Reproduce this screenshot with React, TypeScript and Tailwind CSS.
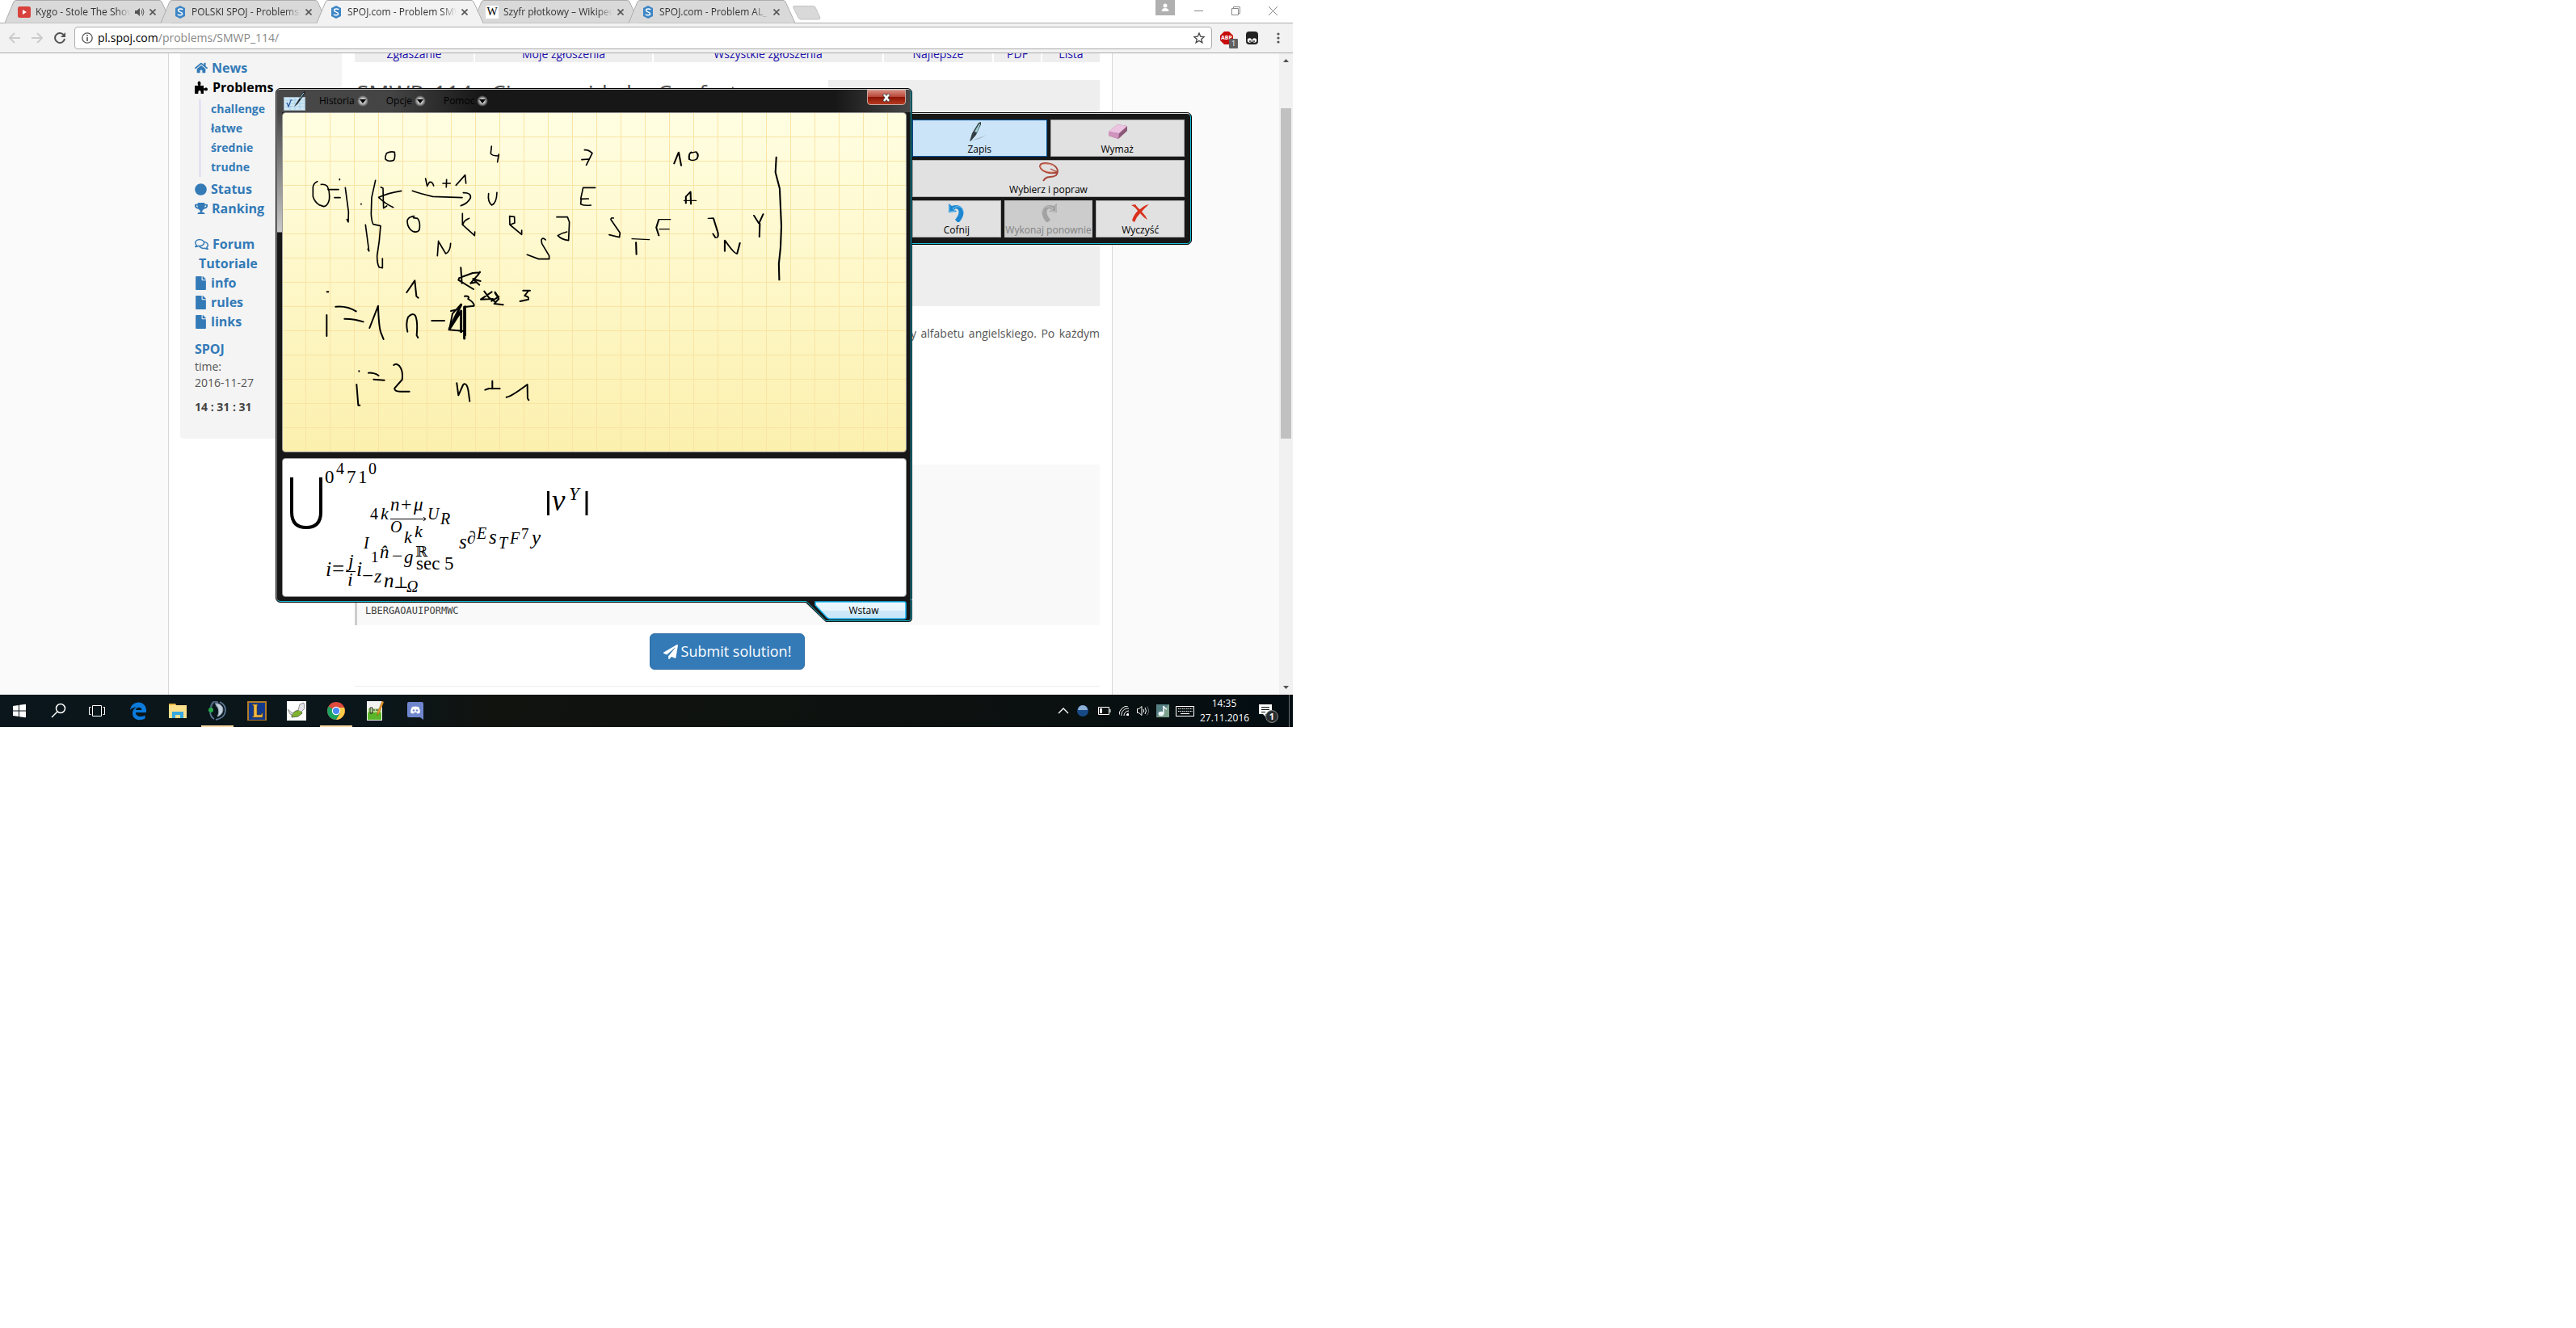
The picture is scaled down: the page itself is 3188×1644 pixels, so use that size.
import React from "react";
import { FaHome, FaCircle, FaTrophy, FaRegComments, FaFile, FaPaperPlane } from "react-icons/fa";

function SpojIcon() {
  return (
    <svg className="size-4 shrink-0" viewBox="0 0 16 16">
      <path d="M8 0l6 3v10l-6 3-6-3V3z" fill="#3d86c6" />
      <path d="M11 5.200C10 3.600 5.600 3.600 5.600 6c0 2.200 5 1.600 5 4 0 2.400-4.600 2.200-5.600.600" fill="none" stroke="#fff" strokeWidth="1.500" />
    </svg>
  );
}

function YoutubeIcon() {
  return (
    <svg className="size-4 shrink-0" viewBox="0 0 16 16">
      <rect y="1" width="16" height="14" rx="2.500" fill="#d9413c" />
      <path d="M6 5l5 3-5 3z" fill="#fff" />
    </svg>
  );
}

function WikiIcon() {
  return (
    <span className="flex size-4 shrink-0 items-center justify-center bg-white font-['Liberation_Serif',serif] text-sm leading-4 text-black">W</span>
  );
}

type TabInfo = { label: string; icon: React.ReactNode; active?: boolean; audio?: boolean };

const tabs: TabInfo[] = [
  { label: "Kygo - Stole The Show", icon: <YoutubeIcon />, audio: true },
  { label: "POLSKI SPOJ - Problems:", icon: <SpojIcon /> },
  { label: "SPOJ.com - Problem SMW", icon: <SpojIcon />, active: true },
  { label: "Szyfr płotkowy – Wikiped", icon: <WikiIcon /> },
  { label: "SPOJ.com - Problem AL_2", icon: <SpojIcon /> },
];

function BrowserTab({ tab }: { tab: TabInfo }) {
  return (
    <div className={`relative -mr-[13px] h-7 w-[206px] ${tab.active ? "z-10" : ""}`}>
      <svg className="absolute inset-0 h-[29px] w-full" viewBox="0 0 206 29" preserveAspectRatio="none">
        <path d="M0 28.500L11 2Q12 .500 14 .500H191Q193 .500 194 2L206 28.500" fill={tab.active ? "#f2f2f2" : "#d9d9d9"} stroke="#adadad" />
        {tab.active && <path d="M1 28.500H205" stroke="#f2f2f2" strokeWidth="2" />}
      </svg>
      <div className="relative flex h-full items-center pt-px pr-[17px] pl-4">
        {tab.icon}
        <span className="ml-1.5 min-w-0 flex-1 overflow-hidden whitespace-nowrap text-[12px] leading-4 text-[#333] [mask-image:linear-gradient(to_right,black_86%,transparent)]">{tab.label}</span>
        {tab.audio && (
          <svg className="ml-1.5 size-3 shrink-0" viewBox="0 0 12 12">
            <path d="M0 4h2.500L6 1v10L2.500 8H0z" fill="#555" />
            <path d="M8 3.500Q9.500 6 8 8.500M9.500 1.500Q12.500 6 9.500 10.500" fill="none" stroke="#555" />
          </svg>
        )}
        <button aria-label="Close tab" className="ml-1 flex size-3 shrink-0 items-center justify-center">
          <svg className="size-2" viewBox="0 0 8 8"><path d="M.500.500l7 7m0-7l-7 7" stroke="#555" strokeWidth="1.600" /></svg>
        </button>
      </div>
    </div>
  );
}

function BrowserChrome() {
  return (
    <header className="border-b border-[#adadad] bg-[#f2f2f2]">
      <div className="flex h-[29px] items-start border-b border-[#adadad] bg-white pl-1.5">
        {tabs.map((t) => <BrowserTab key={t.label} tab={t} />)}
        <button aria-label="New tab" className="mt-[7px] ml-2.5">
          <svg className="h-[18px] w-[35px]" viewBox="0 0 35 18"><path d="M2 .500H25Q27 .500 28 2L34 15Q34 17 32 17H10Q8 17 7 15L.700 2Q.500 .500 2 .500z" fill="#d9d9d9" stroke="#c4c4c4" /></svg>
        </button>
        <div className="ml-auto flex items-start">
          <div className="mr-6 flex h-[19px] w-6 items-center justify-center bg-[#b0b0b0]">
            <svg className="h-3 w-2.5" viewBox="0 0 10 12"><circle cx="5" cy="3" r="2.500" fill="#fff" /><path d="M.500 10Q1 6 5 6t4.500 4z" fill="#fff" /></svg>
          </div>
          <div className="flex h-[27px] items-center gap-[35px] pr-[19px]">
            <button aria-label="Minimize"><svg className="size-[11px]" viewBox="0 0 11 11"><path d="M0 5.500h11" stroke="#888" /></svg></button>
            <button aria-label="Restore"><svg className="size-[11px]" viewBox="0 0 11 11"><path d="M.500 2.500h8v8h-8zM2.500 2.500v-2h8v8h-2" fill="none" stroke="#888" /></svg></button>
            <button aria-label="Close"><svg className="size-[11px]" viewBox="0 0 11 11"><path d="M0 0l11 11M11 0L0 11" stroke="#888" /></svg></button>
          </div>
        </div>
      </div>
      <div className="flex h-9 items-center">
        <button aria-label="Back" className="ml-[11px]"><svg className="size-3.5" viewBox="0 0 14 14"><path d="M7 1L1 7l6 6M1 7h13" fill="none" stroke="#ccc" strokeWidth="2" /></svg></button>
        <button aria-label="Forward" className="ml-3.5"><svg className="size-3.5" viewBox="0 0 14 14"><path d="M7 1l6 6-6 6M13 7H0" fill="none" stroke="#ccc" strokeWidth="2" /></svg></button>
        <button aria-label="Reload" className="ml-3.5"><svg className="size-3.5" viewBox="0 0 14 14"><path d="M12 3.500A6 6 0 1 0 13 8" fill="none" stroke="#555" strokeWidth="2" /><path d="M14 0v6H8z" fill="#555" /></svg></button>
        <div className="ml-[11px] flex h-7 flex-1 items-center rounded-sm border border-[#adadad] bg-white pr-2 pl-2">
          <svg className="size-3.5 shrink-0" viewBox="0 0 14 14"><circle cx="7" cy="7" r="6.200" fill="none" stroke="#555" strokeWidth="1.300" /><path d="M7 6v5M7 3v1.700" stroke="#555" strokeWidth="1.600" /></svg>
          <label className="ml-1.5 flex flex-1 text-[14px] leading-5 text-[#888]">
            <span className="text-black">pl.spoj.com</span>
            <input className="min-w-0 flex-1 bg-transparent outline-none" defaultValue="/problems/SMWP_114/" />
          </label>
          <svg className="size-3.5 shrink-0" viewBox="0 0 14 14"><path d="M7 1l1.700 4.200 4.500.300-3.500 2.900 1.200 4.400L7 10.400l-3.900 2.400 1.200-4.400L.800 5.500l4.500-.300z" fill="none" stroke="#444" strokeWidth="1.300" /></svg>
        </div>
        <div className="relative ml-2.5 flex size-4 items-center justify-center">
          <svg className="size-4" viewBox="0 0 16 16"><path d="M5 0h6l5 5v6l-5 5H5l-5-5V5z" fill="#c70d0d" /></svg>
          <span className="absolute text-[7px] leading-4 font-bold text-white">ABP</span>
          <span className="absolute top-[9px] left-[11px] flex h-3 w-[11px] items-center justify-center rounded-[1px] bg-[#616161] text-[9px] leading-3 text-white">1</span>
        </div>
        <svg className="ml-4 h-4 w-[15px]" viewBox="0 0 15 16"><rect width="15" height="16" rx="4" fill="#222" /><circle cx="4.500" cy="11" r="2.700" fill="#fff" /><circle cx="10.500" cy="11" r="2.700" fill="#fff" /><circle cx="5" cy="12" r="1" fill="#222" /><circle cx="10" cy="12" r="1" fill="#222" /></svg>
        <button aria-label="Menu" className="mr-4 ml-[23px]"><svg className="h-3.5 w-1" viewBox="0 0 4 14"><circle cx="2" cy="2" r="1.600" fill="#555" /><circle cx="2" cy="7" r="1.600" fill="#555" /><circle cx="2" cy="12" r="1.600" fill="#555" /></svg></button>
      </div>
    </header>
  );
}

function PuzzleIcon() {
  return (
    <svg className="mr-px size-4" viewBox="0 0 16 16" fill="currentColor">
      <path d="M0 6h4.500Q3 3 4 1.500 5.500-.500 7 1.500 8 3 6.800 6H11v3.500q2-.500 3-1.200 2 .200 2 2.200t-2 2q-1.500-.500-3-1V16H7.500q.800-4-1.500-4T4.500 16H0z" />
    </svg>
  );
}

function SideLink({ icon, children, black }: { icon?: React.ReactNode; children: React.ReactNode; black?: boolean }) {
  return (
    <a href="#" className={`flex h-6 items-center gap-[5px] text-[16px] font-bold ${black ? "text-black" : "text-[#337ab7]"}`}>
      {icon}
      <span>{children}</span>
    </a>
  );
}

function Sidebar() {
  return (
    <nav className="h-[477px] w-[200px] rounded-b bg-[#f4f4f4] pt-1.5 pl-[18px]">
      <SideLink icon={<FaHome className="size-4" />}>News</SideLink>
      <SideLink black icon={<PuzzleIcon />}>Problems</SideLink>
      <div className="mt-[3px] ml-1.5 flex flex-col border-l border-[#c4c4ee] pl-[13px] text-[14px] leading-6 font-bold text-[#337ab7]">
        <a href="#">challenge</a>
        <a href="#">łatwe</a>
        <a href="#">średnie</a>
        <a href="#">trudne</a>
      </div>
      <div className="mt-[3px]">
        <SideLink icon={<FaCircle className="size-[15px]" />}>Status</SideLink>
        <SideLink icon={<FaTrophy className="size-4" />}>Ranking</SideLink>
      </div>
      <div className="mt-5">
        <SideLink icon={<FaRegComments className="size-[17px]" />}>Forum</SideLink>
        <SideLink><span className="ml-[5px]">Tutoriale</span></SideLink>
        <SideLink icon={<FaFile className="h-[17px] w-[15px]" />}>info</SideLink>
        <SideLink icon={<FaFile className="h-[17px] w-[15px]" />}>rules</SideLink>
        <SideLink icon={<FaFile className="h-[17px] w-[15px]" />}>links</SideLink>
      </div>
      <div className="mt-2.5"><SideLink>SPOJ</SideLink></div>
      <p className="text-[14px] leading-5 text-[#555]">time:<br />2016-11-27</p>
      <p className="mt-2.5 text-[14px] leading-5 font-bold text-[#444]">14 : 31 : 31</p>
    </nav>
  );
}

function Page() {
  return (
    <div className="flex bg-[#fafafa]">
      <div className="mr-[206px] ml-[208px] flex flex-1 items-start border-x border-[#d8d8dc] bg-white pr-[15px] pl-3.5">
        <Sidebar />
        <main className="ml-4 flex-1">
          <div className="flex h-[11px] items-end gap-0.5 overflow-hidden text-center text-[14px] leading-5 text-[#1a0dab]">
            <a href="#" className="w-[147px] bg-[#eee]">Zgłaszanie</a>
            <a href="#" className="w-[219px] bg-[#eee]">Moje zgłoszenia</a>
            <a href="#" className="w-[283px] bg-[#eee]">Wszystkie zgłoszenia</a>
            <a href="#" className="w-[134px] bg-[#eee]">Najlepsze</a>
            <a href="#" className="w-[58px] bg-[#eee]">PDF</a>
            <a href="#" className="flex-1 bg-[#eee]">Lista</a>
          </div>
          <div className="mt-[22px] flex h-[280px] justify-between">
            <h1 className="ml-0.5 text-[28px] leading-8 font-medium whitespace-nowrap text-[#555]">SMWP_114 - Cinema side by Confort</h1>
            <div className="w-[336px] bg-[#eee]" />
          </div>
          <div className="mt-6 flex justify-end">
            <p className="w-[234px] text-[14px] leading-5 whitespace-nowrap text-[#555] [text-align-last:justify]">y alfabetu angielskiego. Po każdym</p>
          </div>
          <pre className="mt-[152px] flex h-[199px] items-end border-l-[3px] border-[#ccc] bg-[#f9f9f9] pb-2 pl-2.5 font-['DejaVu_Sans_Mono',monospace] text-[12px] leading-5 text-[#444]">LBERGAOAUIPORMWC</pre>
          <div className="mt-2.5 flex justify-center border-b border-[#eee] pb-5">
            <button className="flex h-[45px] items-center gap-1 rounded-md border border-[#2e6da4] bg-[#337ab7] px-4 text-[18px] text-white">
              <FaPaperPlane className="size-[18px]" />
              <span>Submit solution!</span>
            </button>
          </div>
          <div className="h-2.5" />
        </main>
      </div>
      <div className="flex w-[17px] flex-col items-center bg-[#f1f1f1] py-1.5">
        <svg className="mt-px h-1 w-[7px]" viewBox="0 0 7 4"><path d="M3.500 0L7 4H0z" fill="#505050" /></svg>
        <div className="mt-[57px] h-[409px] w-[13px] bg-[#c1c1c1]" />
        <svg className="mt-auto mb-px h-1 w-[7px]" viewBox="0 0 7 4"><path d="M3.500 4L7 0H0z" fill="#505050" /></svg>
      </div>
    </div>
  );
}

function Ink() {
  return (
    <svg className="block h-[419px] w-full" role="img" aria-label="Handwritten formula">
      <defs>
        <linearGradient id="paper" x1="0" y1="0" x2="0" y2="1"><stop offset="0" stopColor="#fffee2" /><stop offset="1" stopColor="#fcf0ae" /></linearGradient>
        <pattern id="cells" width="30" height="30" x="28" y="29" patternUnits="userSpaceOnUse"><path d="M.500 0V30M0 .500H30" stroke="#f9e4a4" /></pattern>
      </defs>
      <rect width="100%" height="100%" fill="url(#paper)" />
      <rect width="100%" height="100%" fill="url(#cells)" />
      <g transform="translate(-350 -140)" fill="none" stroke="#000" strokeLinecap="round" strokeLinejoin="round">
        <g transform="translate(370 175) scale(.3333)" strokeWidth="5">
          <path d="M325 45Q318 60 322 67Q335 78 352 70Q358 60 355 40Q340 36 325 44" />
          <path d="M715 18L712 45Q716 54 740 54M742 48L737 77M1060 32Q1075 30 1089 44L1067 88M1050 68L1076 66" />
          <path d="M68 149Q54 155 52 170V205Q58 225 75 236L92 242Q106 240 112 218Q116 190 106 168Q98 158 82 160" />
          <path d="M108 179H147M132 209H153M151 140v3M172 172L184 262L183 300L178 290M231 232v2" />
          <path d="M284 145L270 208L268 270Q270 300 276 308L303 314L298 370L290 425Q290 455 298 468L310 470V435M247 310L260 408L256 400" />
          <path d="M304 170L312 174L314 248L326 240M380 184Q330 192 296 208Q320 232 350 245" />
          <path d="M421 184Q450 194 497 205L606 209M610 191Q640 190 637 210Q625 232 601 239" />
          <path d="M470 138L476 166L484 152Q496 148 500 165M534 156H562M548 142L547 170M583 163L617 125L620 156" />
          <path d="M704 194Q700 225 716 237Q734 230 735 190M1100 172H1055L1046 214L1075 213M1048 214L1046 233Q1060 240 1084 237" />
          <path d="M428 278Q402 280 402 298Q404 325 425 335Q440 340 447 328Q452 300 440 286L425 284" />
          <path d="M607 268V310M632 286Q612 294 608 310L652 350L653 336M782 278L783 310L801 303L800 280L782 278M786 312L827 346V330" />
          <path d="M957 281L997 281L1004 300L1001 368Q975 365 961 350Q975 340 995 336M1168 285Q1158 282 1158 290L1192 340L1190 356L1152 347" />
          <path d="M916 366Q905 355 900 366L902 380L929 425V437H890L847 421M518 370L514 425M520 375L545 417Q562 410 563 379" />
        </g>
        <g transform="translate(330 100) scale(.523 .3333)" strokeWidth="4">
          <path d="M964 308L975 265L981 315M1005 265Q998 270 1000 292Q1008 300 1018 290Q1024 275 1016 264L1004 268" />
          <path d="M992 455V430L1003 412L1004 458M988 445H1016M955 515H928L922 545L928 575M930 551H952M865 587L905 590M874 600L875 645" />
          <path d="M1045 511L1057 510L1068 565Q1070 585 1062 583L1056 568M1084 633V592Q1105 640 1113 643L1120 602" />
          <path d="M1153 500L1165 530L1175 495M1167 530L1166 580M1206 283L1204 340L1214 400L1218 540L1216 620L1212 680L1213 740" />
        </g>
        <g transform="translate(330 320) scale(.3333)" strokeWidth="6">
          <path d="M721 34L725 92M792 52L765 54L715 72L712 80L768 114M792 50L784 62L757 92L780 88M794 84L766 76L790 98" />
          <path d="M520 126L550 82L556 140L563 146M735 140Q755 138 748 150Q772 165 770 176L735 180" />
          <path d="M808 122L825 145L850 162M836 124L795 152L840 150M848 125L858 140M862 142L835 158M848 128L862 150L845 168L878 172" />
          <path d="M978 119H952M972 120L958 138Q975 142 972 152L941 159M224 124h5M223 210V288M256 179Q300 175 332 196M289 224Q330 225 359 235" />
          <path d="M382 258L414 176Q416 250 424 275L434 300M523 272Q516 240 525 218Q540 200 552 212Q562 235 557 285L562 294M613 231H660" />
          <path strokeWidth="9" d="M722 172L678 263L722 195V272M734 180V297" />
          <path d="M738 178V285M722 170L690 205L678 265L735 270M684 195L706 190" />
          <path d="M343 418v1M334 468L340 545H346M378 425Q400 424 416 435M397 449L437 452" />
          <path d="M472 396Q480 388 492 398Q508 418 503 450L475 482Q474 494 495 494H530M706 463L712 508L730 468Q745 458 750 500L754 530" />
          <path d="M811 488L825 483H866M838 455V484M890 515Q905 515 968 468L969 520L973 526" />
        </g>
      </g>
    </svg>
  );
}

type Glyph = [string, number, number, number, boolean?];

const glyphs: Glyph[] = [
  ["0", 402, 598, 23], ["4", 416, 587, 20], ["7", 429, 598, 23], ["1", 443, 598, 23], ["0", 456, 587, 20],
  ["4", 458, 643, 20], ["k", 471, 643, 22, true], ["n", 483, 632, 23, true], ["+", 496, 632, 24], ["μ", 512, 632, 23, true],
  ["O", 483, 659, 20, true], ["U", 529, 643, 20, true], ["R", 545, 649, 20, true],
  ["k", 500, 672, 22, true], ["k", 513, 665, 22, true], ["I", 450, 679, 20, true],
  ["1", 459, 696, 19], ["n̂", 470, 691, 23, true], ["−", 485, 696, 24], ["g", 500, 697, 23, true], ["ℝ", 514, 689, 18], ["sec 5", 515, 705, 23],
  ["i", 403, 713, 26, true], ["=", 411, 713, 27], ["j", 431, 702, 24, true], ["i", 430, 725, 24, true], ["i", 441, 713, 26, true],
  ["−", 448, 721, 25], ["z", 463, 721, 24, true], ["n", 475, 727, 25, true], ["⊥", 487, 728, 20], ["Ω", 503, 733, 20, true],
  ["v", 683, 632, 37, true], ["Y", 704, 619, 23, true],
  ["s", 568, 679, 25, true], ["∂", 578, 673, 22, true], ["E", 590, 667, 20, true], ["s", 605, 673, 25, true], ["T", 617, 679, 20, true],
  ["F", 631, 673, 20, true], ["7", 645, 667, 19], ["y", 658, 674, 25, true],
];

function Formula() {
  return (
    <svg className="block h-[170px] w-full bg-white font-['Liberation_Serif','DejaVu_Serif',serif]" role="img" aria-label="Recognised formula">
      <g transform="translate(-350 -568)">
        {glyphs.map(([t, x, y, size, italic], i) => (
          <text key={i} x={x} y={y} fontSize={size} fontStyle={italic ? "italic" : "normal"}>{t}</text>
        ))}
        <path d="M361 591V634Q361 653 379 653Q397 653 397 634V591" fill="none" stroke="#000" strokeWidth="4" />
        <path d="M678.500 608V638M726 608V638" stroke="#000" strokeWidth="3" />
        <path d="M483 642.500H527M524 640l3 2.500-3 2.500M428 707.500H440" fill="none" stroke="#000" />
      </g>
    </svg>
  );
}

function MenuButton({ label }: { label: string }) {
  return (
    <button className="flex items-center gap-0.5 text-black">
      {label}
      <svg className="size-4" viewBox="0 0 16 16">
        <circle cx="8" cy="8" r="7" fill="url(#glow)" />
        <path d="M4 6h8l-4 5z" fill="#000" />
      </svg>
    </button>
  );
}

function MathWindow() {
  return (
    <section className="absolute top-[109px] left-[341px] z-20 w-[788px]">
      <svg className="absolute h-0 w-0"><defs><radialGradient id="glow"><stop offset=".300" stopColor="#ddd" /><stop offset="1" stopColor="#fff" stopOpacity="0" /></radialGradient></defs></svg>
      <div className="rounded-md border border-black bg-[#171717]">
        <div className="rounded-[5px] border border-t-[#ccc] border-r-[#18c0d8] border-b-[#18c0d8] border-l-[#888]">
          <div className="flex h-7 items-center rounded-t bg-[linear-gradient(to_right,#484848,#444_18%,#171717_32%,#171717_88%,#484848)] pr-1.5 pl-2 text-[12px]">
            <svg className="h-[26px] w-[30px]" viewBox="0 0 30 26">
              <rect x=".500" y="8.500" width="26" height="16" fill="#cfe6f3" stroke="#9fb6c4" />
              <path d="M2 12H26M2 16H26M2 20H26M8 9V24M14 9V24M20 9V24" stroke="#8dc3e4" strokeWidth=".600" />
              <path d="M4 15l2 5 3-8h2" fill="none" stroke="#27549c" strokeWidth="1.200" />
              <path d="M13 20L22 6 26 0 27 3 17 17z" fill="#20272d" /><path d="M20 10L25 3" stroke="#8ccbe0" />
            </svg>
            <div className="ml-3.5 flex gap-[21px]"><MenuButton label="Historia" /><MenuButton label="Opcje" /><MenuButton label="Pomoc" /></div>
            <button aria-label="Close window" className="ml-auto flex h-[19px] w-12 items-center justify-center self-start rounded-b border border-[#c9a8a0] bg-[linear-gradient(#d98a7c,#b8483a_45%,#8e1505_50%,#b53a20)]">
              <svg className="h-3 w-2.5" viewBox="0 0 10 12"><path d="M1.500 1.500l7 9m0-9l-7 9" stroke="#444" strokeWidth="4" /><path d="M2 2l6 8m0-8l-6 8" stroke="#fff" strokeWidth="2.400" /></svg>
            </button>
          </div>
          <div className="flex">
            <div className="w-1.5 shrink-0 bg-[linear-gradient(#484848,#c8c8c8_148px,#171717_149px)]" />
            <div className="flex min-w-0 flex-1 flex-col gap-[7px]">
              <div className="overflow-hidden rounded border border-[#999]"><Ink /></div>
              <div className="overflow-hidden rounded border border-[#999]"><Formula /></div>
            </div>
            <div className="w-[5px] shrink-0" />
          </div>
          <div className="h-[5px]" />
        </div>
      </div>
      <div className="absolute -right-px -bottom-6 h-[27px] w-[135px]">
        <svg className="absolute inset-0 h-full w-full" viewBox="0 0 135 27">
          <path d="M2 0H134V22Q134 27 129 27H27L2 3z" fill="#171717" />
          <path d="M0 1.500H3L27 25.500H129Q132.500 25.500 132.500 22V0" fill="none" stroke="#18c0d8" />
        </svg>
        <button className="absolute top-px right-2 h-[23px] w-[114px] text-[12px] leading-[22px] text-black">
          <svg className="absolute inset-0 h-full w-full" viewBox="0 0 114 23">
            <defs><linearGradient id="insert" x1="0" y1="0" x2="0" y2="1"><stop offset="0" stopColor="#eef7fd" /><stop offset=".500" stopColor="#e6f4fd" /><stop offset=".520" stopColor="#cfe9f9" /><stop offset="1" stopColor="#c8e6f8" /></linearGradient></defs>
            <path d="M1 1H111Q113 1 113 3V20Q113 22 111 22H19Q17 22 15 20L1 5z" fill="url(#insert)" stroke="#14b4ee" strokeWidth="1.500" />
          </svg>
          <span className="relative ml-2">Wstaw</span>
        </button>
      </div>
    </section>
  );
}

function ToolButton({ label, active, disabled, children }: { label: string; active?: boolean; disabled?: boolean; children: React.ReactNode }) {
  return (
    <button disabled={disabled} className={`flex h-[46px] flex-1 flex-col items-center border pt-0.5 text-[12px] leading-[18px] whitespace-nowrap ${active ? "border-[#00539c] bg-[#cce4f7] text-black" : disabled ? "border-[#bfbfbf] bg-[#ccc] text-[#838383]" : "border-[#adadad] bg-[#e1e1e1] text-black"}`}>
      <svg className="h-6 w-6 shrink-0" viewBox="0 0 24 24">{children}</svg>
      <span className="pt-px">{label}</span>
    </button>
  );
}

function ToolWindow() {
  return (
    <section className="absolute top-[139px] left-[1123px] z-10 w-[352px] rounded-md border border-black bg-[#171717]">
      <div className="flex flex-col gap-1 rounded-[5px] border border-t-[#ddd] border-r-[#18c0d8] border-b-[#18c0d8] py-[7px] pr-[7px] pl-1">
        <div className="flex gap-1">
          <ToolButton label="Zapis" active>
            <path d="M2 23L21 16 12 21z" fill="#a9bccb" /><path d="M0 24L3 14 11 1 14 0 14 3 8 16 2 23z" fill="#333f45" /><path d="M6 12L12 2l1 1-4 10z" fill="#9fd0d6" />
          </ToolButton>
          <ToolButton label="Wymaż">
            <path d="M1 12L12 3 24 5V11L13 21 1 17z" fill="#8c5878" /><path d="M1 12L12 3 24 5 14 14z" fill="#ecc4e2" /><path d="M1 12L14 14 13 21 1 17z" fill="#d093be" />
          </ToolButton>
        </div>
        <div className="flex">
          <ToolButton label="Wybierz i popraw">
            <path d="M23 12C14 15 3 12 1 5 1 0 10 0 17 3c7 4 7 9 4 13-6 4-11-1-16 7" fill="none" stroke="#a8483a" strokeWidth="2" /><path d="M21 11C15 13 4 11 2 6S12 1 18 4" fill="none" stroke="#e79a84" strokeWidth="1" /><path d="M14 8l9 4" stroke="#9c4034" strokeWidth="1.200" />
          </ToolButton>
        </div>
        <div className="flex gap-1">
          <ToolButton label="Cofnij">
            <path d="M2 1L2 12 12 11 9 8C14 5 18 12 10 21L14 25C26 14 20-1 6 4z" fill="#1c86d1" /><path d="M3 3V11L10 10 7 7C14 2 20 6 20 11" fill="none" stroke="#6ec4f0" strokeWidth="1" />
          </ToolButton>
          <ToolButton label="Wykonaj ponownie" disabled>
            <path d="M22 1L22 12 12 11 15 8C10 5 6 12 14 21L10 25C-2 14 4-1 18 4z" fill="#a2a2a2" /><path d="M21 3V11L14 10 17 7C10 2 4 6 4 11" fill="none" stroke="#c4c4c4" strokeWidth="1" />
          </ToolButton>
          <ToolButton label="Wyczyść">
            <path d="M1 3L6 2Q10 8 12 8 17 3 23 2 17 7 14 11 19 16 21 21 17 19 12 13 7 18 5 24L2 22Q4 15 9 10 6 5 1 3z" fill="#d9301c" />
          </ToolButton>
        </div>
      </div>
    </section>
  );
}

const W = "#fff";

const pinned: { name: string; running?: boolean; art: React.ReactNode }[] = [
  { name: "Edge", art: <path d="M2 11C3 5 7 1.500 12.500 1.500S22 6 22 11v3H9c0 5 6 6.500 11.500 3.500v4C13 25.500 4.500 22 5 14.500 5 11 7 9 10 7.500 6 7.500 3.500 9 2 11zM9 11h7.500C16.500 6.500 9.500 6.500 9 11z" fill="#0b7bdc" /> },
  { name: "File Explorer", art: <><path d="M1 3h8l1 2h13v16H1z" fill="#fbe08c" /><path d="M1 3h8v2H1z" fill="#e9b73f" /><path d="M5 21v-8h14v8h-4v-4H9v4z" fill="#37a9e1" /></> },
  { name: "TeamSpeak", running: true, art: <><path d="M4 8C5 0 11-1 12 2l-1 5" fill="none" stroke="#4c6480" strokeWidth="2.500" /><path d="M9 3c12-1 13 13 3 16 3-5 2-11-3-16z" fill="#c4d0dc" stroke="#8fa2b7" /><path d="M15 1c10 5 10 19-5 22M3 14q1 6 5 8" fill="none" stroke="#5c7694" strokeWidth="1.800" /><circle cx="4" cy="11" r="3" fill="#27ae4d" /></> },
  { name: "League of Legends", art: <><rect x="1" y="1" width="22" height="23" fill="#123a8c" stroke="#b27b28" strokeWidth="2" /><path d="M6 4h7l-1 2v11h5l2-3v6H6l2-2V6z" fill="#f0bb42" stroke="#6d430c" strokeWidth=".600" /></> },
  { name: "Wing", art: <><rect width="24" height="24" fill="#fff" /><path d="M6 16l5-4 6-1 2 4-5 4-8 1z" fill="#7fb32e" stroke="#444" strokeWidth=".700" /><path d="M7 15L1 10l3 6 4 1M14 11l2-7 5-2 1 7-4 4" fill="#e4e4ea" stroke="#777" strokeWidth=".800" /></> },
  { name: "Chrome", running: true, art: <><circle cx="12" cy="12" r="11" fill="#dd4b3e" /><path d="M2.500 6.500A11 11 0 0 0 12 23l5-8z" fill="#1da462" /><path d="M22 8H12l5 7-5 8A11 11 0 0 0 22 8z" fill="#ffcd46" /><circle cx="12" cy="12" r="5.200" fill="#fff" /><circle cx="12" cy="12" r="4" fill="#4a8af4" /></> },
  { name: "Editor", art: <><path d="M1 0h19v24H1z" fill="#f2f2f2" /><path d="M2 14h17v9H2z" fill="#5bb528" /><path d="M2 9h17v5H2z" fill="#b8de90" /><path d="M5 8h3v7H5zM9 11h2M12 11h3" stroke="#222" fill="none" /><path d="M22 1l-6 14-2 3v-4l6-14z" fill="#eb9a28" stroke="#8e5410" strokeWidth=".500" /></> },
  { name: "Discord", art: <><path d="M4 1h16q2 0 2 2v20l-4-3H4q-2 0-2-2V3q0-2 2-2z" fill="#6f86cf" /><path d="M8 7q4-1 8 0 2 3 2 7-2 1.500-3.500 1.500l-1-1.500h-3l-1 1.500Q8 15.500 6 14q0-4 2-7z" fill="#fff" /><circle cx="10" cy="11.500" r="1.200" fill="#6f86cf" /><circle cx="14" cy="11.500" r="1.200" fill="#6f86cf" /></> },
];

function Taskbar() {
  return (
    <footer className="flex h-10 items-stretch bg-[linear-gradient(to_right,#0a161b,#0b161a_30%,#11130f_38%,#0b1110_80%,#030d12)] text-white">
      <button aria-label="Start" className="flex w-12 items-center justify-center">
        <svg className="size-6" viewBox="0 0 24 24"><path d="M4 6l7-1v6.500H4zM12 4.800l8-1v7.700h-8zM4 12.500h7V19l-7-1zM12 12.500h8v7.700l-8-1z" fill={W} /></svg>
      </button>
      <button aria-label="Search" className="flex w-12 items-center justify-center">
        <svg className="size-6" viewBox="0 0 24 24"><circle cx="15" cy="9" r="5.500" fill="none" stroke={W} strokeWidth="1.500" /><path d="M11 13l-7 7" stroke={W} strokeWidth="1.500" /></svg>
      </button>
      <button aria-label="Task view" className="flex w-12 items-center justify-center">
        <svg className="size-6" viewBox="0 0 24 24"><path d="M6.500 5.500h11v13h-11zM4.500 7.500h-2v9h2M19.500 7.500h2v9h-2" fill="none" stroke={W} /></svg>
      </button>
      <div className="ml-0.5 flex">
        {pinned.map((t) => (
          <button key={t.name} aria-label={t.name} className="flex w-[49px] flex-col items-center justify-between">
            <svg className="mt-2 size-6" viewBox="0 0 24 24">{t.art}</svg>
            {t.running && <span className="h-0.5 w-10 bg-[#fcd9a4]" />}
          </button>
        ))}
      </div>
      <div className="ml-auto flex items-center">
        <svg className="h-2 w-3.5" viewBox="0 0 14 8"><path d="M1 7l6-6 6 6" fill="none" stroke={W} strokeWidth="1.300" /></svg>
        <svg className="ml-2.5 size-3.5" viewBox="0 0 14 14"><circle cx="7" cy="7" r="7" fill="#174a86" /><path d="M1 6a6 6 0 0 1 12 0z" fill="#8db0d4" /></svg>
        <svg className="ml-3 h-2.5 w-4" viewBox="0 0 16 10"><path d="M.500.500h13v9H.500zM15 3v4" fill="none" stroke={W} /><path d="M2 2h3v6H2z" fill={W} /></svg>
        <svg className="ml-2.5 size-3" viewBox="0 0 12 12"><path d="M0 11A11 11 0 0 1 11 0M3 12A8 8 0 0 1 12 3M6 12A6 6 0 0 1 12 6M9 12a3 3 0 0 1 3-3" fill="none" stroke={W} /><path d="M10 10h2v2h-2z" fill={W} /></svg>
        <svg className="ml-2.5 h-3.5 w-4" viewBox="0 0 16 14"><path d="M.500 4.500h2L6 1.500v11L2.500 9.500h-2zM8 5q1.500 2 0 4M10 3q3 4 0 8" fill="none" stroke={W} /><path d="M12.500 1.500q4 5.500 0 11" fill="none" stroke="#777" /></svg>
        <svg className="ml-2 size-4" viewBox="0 0 16 16"><rect width="16" height="16" fill="#7ba08c" /><path d="M0 16V0h16z" fill="#3c6a7d" opacity=".600" /><ellipse cx="6" cy="11.500" rx="3.500" ry="2.800" fill="#eef6fa" /><path d="M9 11V2q1 3 4 4" fill="none" stroke="#eef6fa" strokeWidth="1.600" /></svg>
        <svg className="ml-2 h-[13px] w-6" viewBox="0 0 24 13"><rect x=".500" y=".500" width="22" height="12" fill="none" stroke={W} /><path d="M3 3.500h18M3 6.500h18" stroke={W} strokeDasharray="1.500 1" /><path d="M6 9.500h11" stroke={W} /></svg>
        <div className="ml-1.5 w-[60px] text-center text-[12px] leading-[18px] whitespace-nowrap">14:35<br />27.11.2016</div>
        <button aria-label="Notifications" className="relative mr-0.5 ml-3 size-6">
          <svg className="size-6" viewBox="0 0 24 24"><path d="M1 4h16v12H9v3l-3-3H1z" fill={W} /><path d="M4 7.500h10M4 10.500h10M4 13.500h5" stroke="#111" /></svg>
          <span className="absolute top-[11px] left-[9px] flex size-4 items-center justify-center rounded-full border border-[#888] bg-[#2a2e30] text-[11px] leading-4 font-bold">1</span>
        </button>
        <div className="mr-1 ml-3 h-10 w-px bg-[#6b7275]" />
      </div>
    </footer>
  );
}

export default function App() {
  return (
    <div className="bg-white font-['Open_Sans','Noto_Sans',sans-serif]">
      <div className="relative w-full max-w-[1600px]">
        <BrowserChrome />
        <Page />
        <Taskbar />
        <MathWindow />
        <ToolWindow />
      </div>
    </div>
  );
}
